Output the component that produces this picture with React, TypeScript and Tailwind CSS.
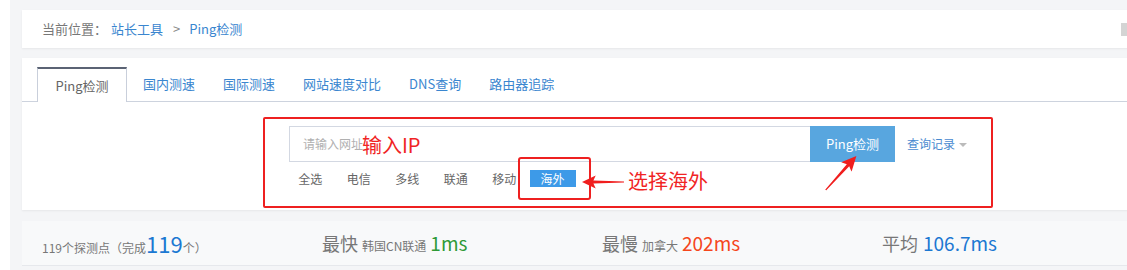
import React from "react";

const font = { fontFamily: '"Noto Sans CJK SC", "Noto Sans", sans-serif' };

const tabs = ["国内测速", "国际测速", "网站速度对比", "DNS查询", "路由器追踪"];
const lines = ["全选", "电信", "多线", "联通", "移动", "海外"];

const Arrow = ({className}: {className?: string}) => (
    <svg viewBox="0 0 46 14" className={className}>
        <polygon points="0,7 15,0 12.5,5.4 46,6.4 46,7.6 12.5,8.6 15,14" fill="#f01e1e" />
    </svg>
);

export default function App() {
    return (
        <div className="w-[1127px] h-[270px] overflow-hidden bg-white" style={font}>
            <div className="ml-[10px] h-full bg-[#f4f5f7] pl-[12px] pt-[10px]">
                {/* 面包屑 */}
                <div className="relative flex h-[38px] w-[1200px] items-center bg-white pl-[20px] text-[13px] shadow-[0_1px_2px_rgba(0,0,0,0.06)]">
                    <span className="text-[#777]">当前位置：</span>
                    <span className="ml-[4px] text-[#3a86cf]">站长工具</span>
                    <span className="ml-[10px] text-[#888]">&gt;</span>
                    <span className="ml-[9px] text-[#3a86cf]">Ping检测</span>
                    <span className="absolute left-[1099px] top-[13px] h-[13px] w-[10px] bg-[#d4d4d4]" />
                </div>

                {/* 主面板 */}
                <div className="relative mt-[10px] h-[152px] w-[1200px] bg-white pt-[9px] shadow-[0_1px_2px_rgba(0,0,0,0.06)]">
                    <div className="flex h-[35px] border-b border-[#cdd3de] pl-[15px] text-[13px] leading-[33px]">
                        <div className="-mb-px h-[35px] w-[90px] border-x border-t-2 border-x-[#c9cfdb] border-t-[#5b6374] bg-white text-center text-[#666]">
                            Ping检测
                        </div>
                        <div className="ml-[2px] flex">
                            {tabs.map((t) => (
                                <span key={t} className="px-[14px] text-[#3a86cf]">{t}</span>
                            ))}
                        </div>
                    </div>

                    <div className="pl-[267px] pt-[24px]">
                        <div className="flex items-center">
                            <div className="flex h-[36px] w-[521px] items-center border border-r-0 border-[#d3d8e2] pl-[13px] text-[12px] text-[#b0b0b0]">
                                请输入网址
                            </div>
                            <div className="flex h-[36px] w-[85px] items-center justify-center bg-[#58a6df] text-[13px] text-white">
                                Ping检测
                            </div>
                            <span className="ml-[12px] text-[12px] text-[#4a8ad0]">查询记录</span>
                            <span className="ml-[4px] mt-[2px] h-0 w-0 border-x-[4px] border-t-[4px] border-x-transparent border-t-[#bbb]" />
                        </div>
                        <div className="-ml-[3px] mt-[8px] flex text-[12px] leading-[17px] text-[#666]">
                            {lines.map((l) => (
                                <span
                                    key={l}
                                    className={l === "海外" ? "ml-[1px] w-[46px] bg-[#3d9ae8] text-center text-white" : "w-[48.5px] text-center"}
                                >
                                    {l}
                                </span>
                            ))}
                        </div>
                    </div>

                    {/* 标注 */}
                    <div className="absolute left-[241px] top-[59px] h-[91px] w-[730px] rounded-[2px] border-2 border-[#ee2020]" />
                    <div className="absolute left-[496px] top-[99px] h-[43px] w-[73px] rounded-[3px] border-2 border-[#ee2020]" />
                    <span className="absolute left-[340px] top-[74px] text-[20px] leading-[26px] text-[#f02424]">输入IP</span>
                    <span className="absolute left-[606px] top-[110px] text-[20px] leading-[26px] text-[#f02424]">选择海外</span>
                    <Arrow className="absolute left-[560px] top-[117px] h-[14px] w-[42px]" />
                    <Arrow className="absolute left-[796px] top-[108px] h-[14px] w-[46px] rotate-[132deg]" />
                </div>

                {/* 统计 */}
                <div className="mt-[11px] grid h-[45px] w-[1200px] grid-cols-[280px_280px_280px_280px] items-center border-b border-[#e6e8ec] bg-[#f8f9fa] pl-[20px] text-[#777]">
                    <div className="flex items-baseline text-[12px]">
                        119个探测点（完成<span className="text-[22px] text-[#1c78d2]">119</span>个）
                    </div>
                    <div className="flex items-baseline">
                        <span className="text-[18px]">最快</span>
                        <span className="ml-[4px] text-[12px]">韩国CN联通</span>
                        <span className="ml-[4px] text-[19px] text-[#2e9a36]">1ms</span>
                    </div>
                    <div className="flex items-baseline">
                        <span className="text-[18px]">最慢</span>
                        <span className="ml-[4px] text-[12px]">加拿大</span>
                        <span className="ml-[4px] text-[19px] text-[#f5461c]">202ms</span>
                    </div>
                    <div className="flex items-baseline">
                        <span className="text-[18px]">平均</span>
                        <span className="ml-[5px] text-[19px] text-[#1c78d2]">106.7ms</span>
                    </div>
                </div>
            </div>
        </div>
    );
}
